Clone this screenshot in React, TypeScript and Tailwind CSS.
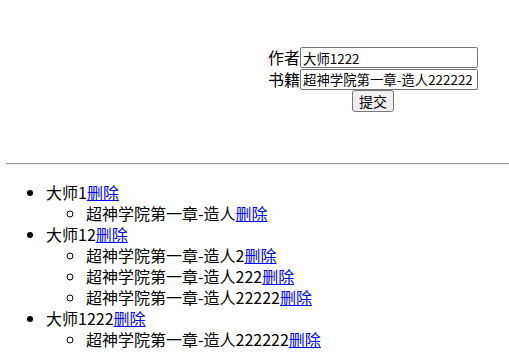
import React from "react";

const authors = [
  { name: "大师1", books: ["超神学院第一章-造人"] },
  { name: "大师12", books: ["超神学院第一章-造人2", "超神学院第一章-造人222", "超神学院第一章-造人22222"] },
  { name: "大师1222", books: ["超神学院第一章-造人222222"] },
];

export default function App() {
  return (
    <div
      className="min-h-[359px] bg-white text-black text-[16px] leading-[21px] overflow-hidden"
      style={{ fontFamily: '"Noto Sans CJK SC", "Noto Sans", sans-serif' }}
    >
      <div className="pt-[47px] ml-[268px] w-[210px] flex flex-col items-center">
        <div className="flex items-center h-[21px] w-full">
          <span className="w-[32px] shrink-0">作者</span>
          <input
            defaultValue="大师1222"
            className="w-[178px] h-[21px] border border-[#767676] rounded-[2px] px-[2px] text-[13.4px] leading-[17px] outline-none"
            style={{ fontFamily: '"Noto Sans CJK SC", sans-serif' }}
          />
        </div>
        <div className="flex items-center h-[22px] w-full">
          <span className="w-[32px] shrink-0">书籍</span>
          <input
            defaultValue="超神学院第一章-造人222222"
            className="w-[178px] h-[21px] border border-[#767676] rounded-[2px] px-[2px] text-[13.4px] leading-[17px] outline-none"
            style={{ fontFamily: '"Noto Sans CJK SC", sans-serif' }}
          />
        </div>
        <button
          className="h-[22px] w-[42px] border border-[#767676] bg-[#efefef] rounded-[3px] text-[14px] leading-[18px] flex items-center justify-center"
          style={{ fontFamily: '"Noto Sans CJK SC", sans-serif' }}
        >
          提交
        </button>
      </div>
      <div className="mt-[51px] ml-[6px] w-[520px] border-t border-t-[#9a9a9a] border-b border-b-[#eeeeee]" />
      <ul className="list-disc pl-[40px] ml-[6px] mt-[17px]">
        {authors.map((a) => (
          <li key={a.name}>
            {a.name}
            <a href="#" className="text-[#0000ee] underline">删除</a>
            <ul className="list-[circle] pl-[40px]">
              {a.books.map((b) => (
                <li key={b}>
                  {b}
                  <a href="#" className="text-[#0000ee] underline">删除</a>
                </li>
              ))}
            </ul>
          </li>
        ))}
      </ul>
    </div>
  );
}
